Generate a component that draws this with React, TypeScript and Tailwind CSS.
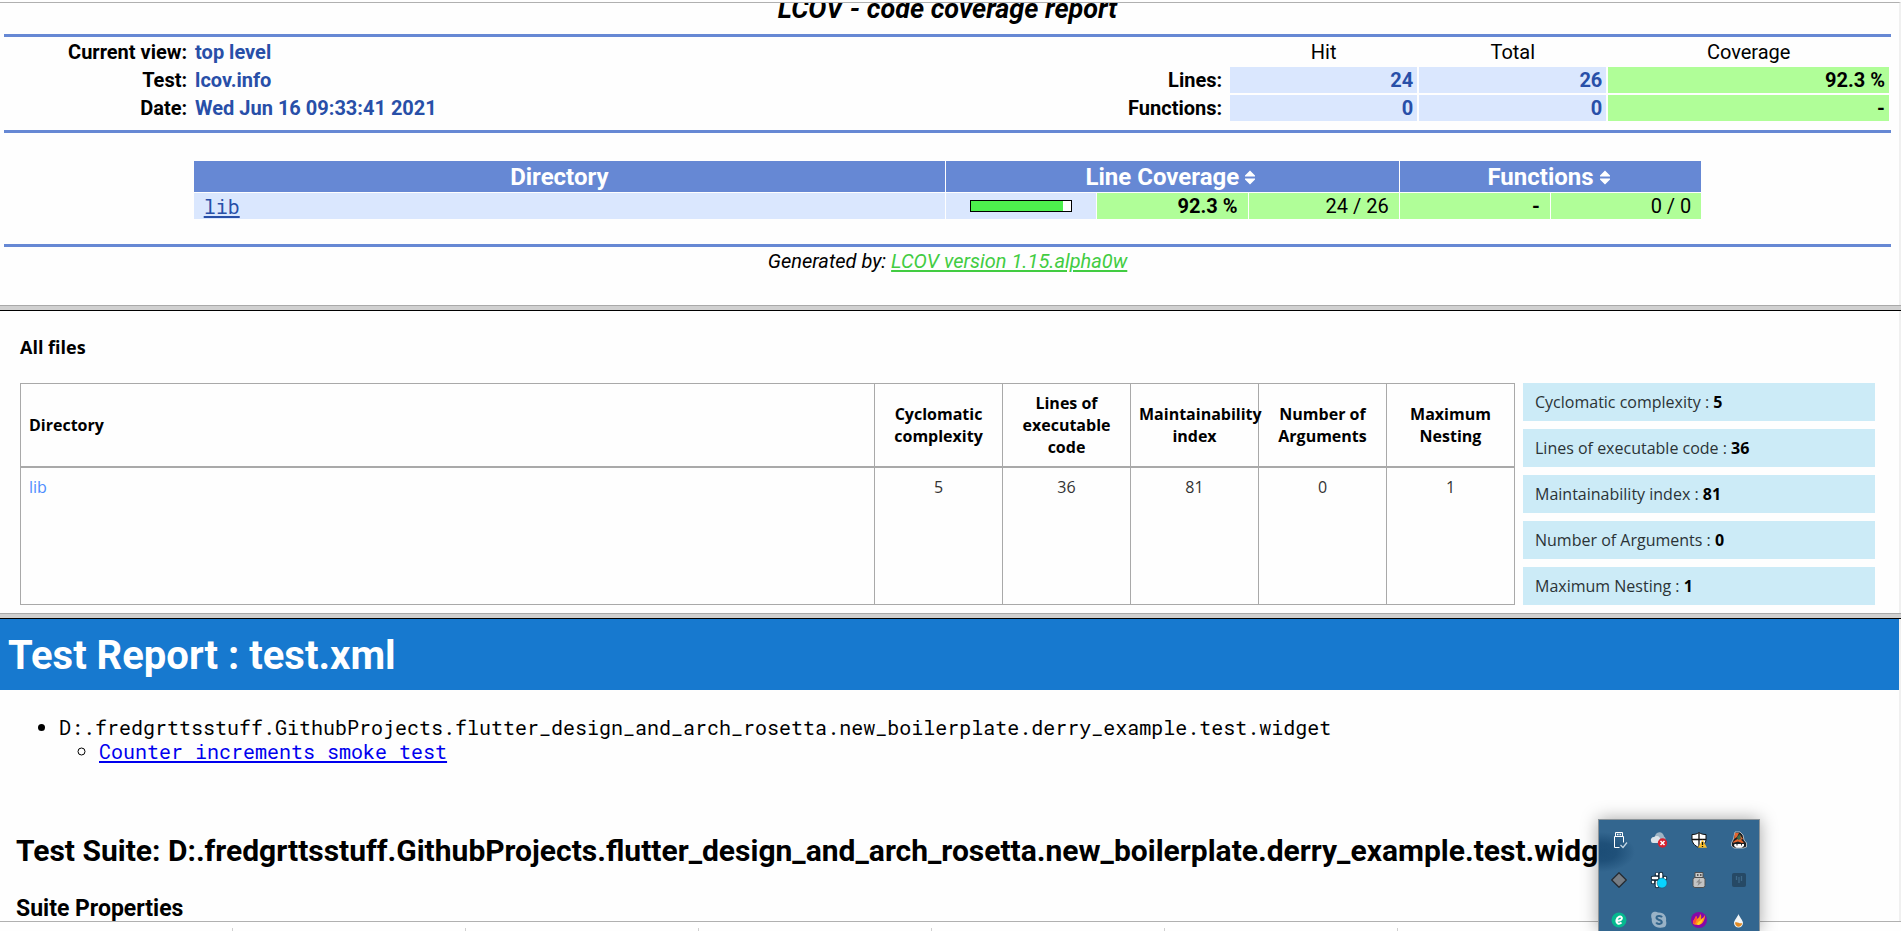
import type { ReactNode } from "react";

const suiteName =
  "D:.fredgrttsstuff.GithubProjects.flutter_design_and_arch_rosetta.new_boilerplate.derry_example.test.widget";

const metrics = [
  { label: "Cyclomatic complexity", value: 5 },
  { label: "Lines of executable code", value: 36 },
  { label: "Maintainability index", value: 81 },
  { label: "Number of Arguments", value: 0 },
  { label: "Maximum Nesting", value: 1 },
];

function Rule() {
  return <div className="h-[3px] bg-[#6688d4]" />;
}

function Splitter() {
  return <div className="h-[6px] shrink-0 border-t border-b border-t-[#a9a9a9] border-b-black bg-[#d0d0d0]" />;
}

function SortIcon() {
  return (
    <svg className="h-[15px] w-[10px]" viewBox="0 0 10 15" fill="#fff" aria-hidden="true">
      <path d="M5 0.5 10 5.5V6.5H0V5.5zM0 8.5H10V9.5L5 14.5 0 9.5z" />
    </svg>
  );
}

function SortHeading({ children }: { children: ReactNode }) {
  return (
    <button type="button" className="mx-auto flex items-center gap-[6px] pr-1 font-bold">
      {children}
      <SortIcon />
    </button>
  );
}

function Summary() {
  const label = "pr-[6px] text-right font-bold";
  const info = "text-left font-bold text-[#284fa8]";
  const count = "bg-[#dae7fe] pr-1 text-right font-bold text-[#284fa8]";
  const cover = "bg-[#b0fe98] pr-1 text-right font-bold";
  return (
    <table className="w-full table-fixed border-separate border-spacing-[2px] text-[20px] leading-[26px]">
      <colgroup>
        <col className="w-[10%]" />
        <col className="w-[35%]" />
        <col className="w-[5%]" />
        <col className="w-[15%]" />
        <col className="w-[10%]" />
        <col className="w-[10%]" />
        <col className="w-[15%]" />
      </colgroup>
      <tbody>
        <tr>
          <th className={label}>Current view:</th>
          <td className={info}>top level</td>
          <td />
          <td />
          <th className="font-normal">Hit</th>
          <th className="font-normal">Total</th>
          <th className="font-normal">Coverage</th>
        </tr>
        <tr>
          <th className={label}>Test:</th>
          <td className={info}>lcov.info</td>
          <td />
          <th className={label}>Lines:</th>
          <td className={count}>24</td>
          <td className={count}>26</td>
          <td className={cover}>92.3 %</td>
        </tr>
        <tr>
          <th className={label}>Date:</th>
          <td className={info}>Wed Jun 16 09:33:41 2021</td>
          <td />
          <th className={label}>Functions:</th>
          <td className={count}>0</td>
          <td className={count}>0</td>
          <td className={cover}>-</td>
        </tr>
      </tbody>
    </table>
  );
}

function CoverageTable() {
  const green = "bg-[#b0fe98] pr-[10px] text-right";
  return (
    <table className="mx-auto w-[80%] table-fixed border-separate border-spacing-[1px] text-[20px] leading-[26px]">
      <colgroup>
        <col className="w-[50%]" />
        <col />
        <col />
        <col />
        <col />
        <col />
      </colgroup>
      <thead>
        <tr className="text-[24px] leading-[29px] text-white">
          <th className="bg-[#6688d4] pt-[2px] pr-5 font-bold">Directory</th>
          <th className="bg-[#6688d4] pt-[2px]" colSpan={3}>
            <SortHeading>Line Coverage</SortHeading>
          </th>
          <th className="bg-[#6688d4] pt-[2px]" colSpan={2}>
            <SortHeading>Functions</SortHeading>
          </th>
        </tr>
      </thead>
      <tbody>
        <tr>
          <td className="bg-[#dae7fe] pl-[10px] font-['Roboto_Mono','Liberation_Mono',monospace]">
            <a href="#lib" className="text-[#284fa8] underline underline-offset-2">
              lib
            </a>
          </td>
          <td className="bg-[#dae7fe]">
            <div className="mx-auto h-[12px] w-[102px] border border-black bg-white">
              <div className="h-full bg-[#4df04d]" style={{ width: "92.3%" }} />
            </div>
          </td>
          <td className={`${green} font-bold`}>92.3 %</td>
          <td className={green}>24 / 26</td>
          <td className={`${green} font-bold`}>-</td>
          <td className={green}>0 / 0</td>
        </tr>
      </tbody>
    </table>
  );
}

function CoveragePane() {
  return (
    <section className="shrink-0 border-t border-r-2 border-t-[#b0b0b0] border-r-[#f0f0f0] px-1 pb-[29px]">
      <div className="flex h-[31px] items-start justify-center overflow-hidden pr-1">
        <h1 className="-mt-[10px] text-[27px] leading-8 font-bold italic">LCOV - code coverage report</h1>
      </div>
      <div className="pr-1">
        <Rule />
        <Summary />
        <div className="pt-[7px]">
          <Rule />
        </div>
        <div className="pt-[27px] pb-6">
          <CoverageTable />
        </div>
        <Rule />
        <p className="text-center text-[20px] leading-[29px] italic">
          Generated by:{" "}
          <a href="#lcov" className="text-[#42cc42] underline underline-offset-2">
            LCOV version 1.15.alpha0w
          </a>
        </p>
      </div>
    </section>
  );
}

function MetricsPane() {
  return (
    <section className="shrink-0 border-r-2 border-[#f0f0f0] px-5 pb-2 font-['Open_Sans','Noto_Sans',sans-serif] text-[16px] leading-[22px]">
      <h2 className="pt-[25px] pb-[25px] text-[18px] font-bold">All files</h2>
      <div className="flex gap-2 pr-1">
        <div className="flex min-w-0 flex-1">
          <table className="w-full table-fixed border-collapse border border-[#a9a9a9]">
            <colgroup>
              <col />
              <col className="w-32" />
              <col className="w-32" />
              <col className="w-32" />
              <col className="w-32" />
              <col className="w-32" />
            </colgroup>
            <thead>
              <tr className="h-[83px] border-b-2 border-[#a9a9a9]">
                <th className="px-2 text-left font-bold">Directory</th>
                {metrics.map((m) => (
                  <th key={m.label} className="border-l border-[#a9a9a9] px-2 font-bold">
                    {m.label}
                  </th>
                ))}
              </tr>
            </thead>
            <tbody>
              <tr className="align-top text-[#333]">
                <td className="px-2 py-2">
                  <a href="#lib-metrics" className="text-[#4d8dff]">
                    lib
                  </a>
                </td>
                {metrics.map((m) => (
                  <td key={m.label} className="border-l border-[#a9a9a9] px-2 py-2 text-center">
                    {m.value}
                  </td>
                ))}
              </tr>
            </tbody>
          </table>
        </div>
        <div className="flex w-[352px] shrink-0 flex-col gap-2">
          {metrics.map((m) => (
            <div key={m.label} className="bg-[#ccebf7] px-3 py-2 text-[#2b3336]">
              {m.label} : <strong className="font-bold text-black">{m.value}</strong>
            </div>
          ))}
        </div>
      </div>
    </section>
  );
}

function TestPane() {
  return (
    <section className="min-h-0 flex-1 overflow-hidden border-r-2 border-[#f0f0f0]">
      <h1 className="bg-[#1779cf] px-2 pt-[13px] pb-[11px] text-[40px] leading-[47px] font-bold text-white">
        Test Report : test.xml
      </h1>
      <ul className="list-disc pt-[25px] pl-[59px] font-['Roboto_Mono','Liberation_Mono',monospace] text-[20px] leading-6">
        <li>
          {suiteName}
          <ul className="list-[circle] pl-10">
            <li>
              <a href="#smoke" className="text-[#0000ee] underline underline-offset-2">
                Counter increments smoke test
              </a>
            </li>
          </ul>
        </li>
      </ul>
      <h2 className="px-4 pt-[70px] text-[30px] leading-[36px] font-bold whitespace-nowrap">Test Suite: {suiteName}</h2>
      <h3 className="px-4 pt-[26px] text-[23px] leading-7 font-bold">Suite Properties</h3>
    </section>
  );
}

const trayIcons: { name: string; art: ReactNode }[] = [
  {
    name: "Safely remove hardware",
    art: (
      <g fill="none" stroke="#fff">
        <path d="M4.500 4.500V.5h7v4M3.500 15.500v-11h9v6M3.500 15.500h5" />
        <path d="M6 2.500h1.500M8.500 2.500H10" strokeWidth="1.500" />
        <path d="M9.500 13l2.500 2.500L16 10.500" stroke="#c4d6e4" strokeWidth="1.300" />
      </g>
    ),
  },
  {
    name: "Cloud sync error",
    art: (
      <g>
        <path d="M4 5a4.500 4.500 0 0 1 9-.5 3 3 0 0 1 1 4L5 9z" fill="#9fb4c4" />
        <path d="M0 9a3 3 0 0 1 3-4 4 4 0 0 1 6 1v5H2a2 2 0 0 1-2-2z" fill="#dce3e9" />
        <circle cx="11.500" cy="11" r="4.700" fill="#d6202f" />
        <path d="M9.500 9l4 4m0-4-4 4" stroke="#fff" strokeWidth="1.500" />
      </g>
    ),
  },
  {
    name: "Windows security",
    art: (
      <g>
        <path d="M8 .5C10 2 12 2.500 15 2.500V7c0 4-3 7-7 8.500C4 14 1 11 1 7V2.500C4 2.500 6 2 8 .5z" fill="#fff" stroke="#111" />
        <path d="M8 1v14M1 7.500h14" stroke="#111" strokeWidth="1.300" />
        <path d="M11.500 7.500 16 15.800H7z" fill="#fbc02d" />
        <path d="M11.500 10v3M11.500 14v1" stroke="#111" strokeWidth="1.300" />
      </g>
    ),
  },
  {
    name: "Character",
    art: (
      <g>
        <path d="M4 0h5l3 3 1 5 2.500 3v4l-3 1H3l-2.500-2V11l2-4z" fill="#1b1f22" stroke="#ece7e2" strokeWidth=".7" />
        <path d="M4 1h4l-2 4-3 2zM9 3l3 4-3 1zM2.500 9.500 8 6l5 4.500-2 .5-4-1.500-5 1.500z" fill="#e2642d" />
        <path d="M6 5l3-3 1 5-3 1z" fill="#3c6b4a" />
        <path d="M3.500 12h9.500v2l-2.500 1.700h-5L3 14z" fill="#fff" />
        <path d="M6 12v1.500M10.500 12v1.500" stroke="#222" />
      </g>
    ),
  },
  {
    name: "Git client",
    art: (
      <path d="M8 .7 15.300 8 8 15.300.7 8z" fill="#777d84" stroke="#262c33" strokeWidth="1.300" strokeLinejoin="round" />
    ),
  },
  {
    name: "Team chat",
    art: (
      <g>
        <g stroke="#12283a" strokeWidth="4.600" strokeLinecap="round">
          <path d="M6 2.500V6M2 6h4M10 2v4M14 6h-2M2 10h4M6 13v1" />
        </g>
        <g stroke="#fff" strokeWidth="2.600" strokeLinecap="round">
          <path d="M6 2v.1M6 6H2M10 2v4M14 6v.1M2 10v.1M6 10v4" />
        </g>
        <circle cx="11" cy="11" r="5" fill="#08d3ff" stroke="#1b5069" strokeWidth=".5" />
      </g>
    ),
  },
  {
    name: "USB device",
    art: (
      <g>
        <path d="M4 .5h8v5H4z" fill="#c9c9c9" stroke="#505050" />
        <path d="M6 3h1.500M9 3h1.500" stroke="#333" strokeWidth="1.500" />
        <rect x="2" y="5.500" width="12" height="10" rx="2" fill="#c4c4c4" stroke="#505050" />
        <path d="M9 6.500 5 10.500h2.500L6.500 14 11.500 9.800H8.700z" fill="#8d8d8d" />
      </g>
    ),
  },
  {
    name: "Audio tool",
    art: (
      <g>
        <rect x="1" y="1" width="14" height="14" rx="2" fill="#264965" />
        <path d="M5.500 4v4M8 5v6M10.500 4v5" stroke="#3d6888" strokeWidth="1.300" />
      </g>
    ),
  },
  {
    name: "Antivirus",
    art: (
      <g>
        <circle cx="8" cy="8" r="7.500" fill="#06b88f" />
        <path d="M5.500 8.600c4 .4 6-1.100 5.300-3C10 3.800 6.300 4.400 5.500 8c-.6 3.700 2.500 4.700 5 2.500" fill="none" stroke="#fff" strokeWidth="2" />
      </g>
    ),
  },
  {
    name: "Skype",
    art: (
      <g>
        <path d="M1 1c2-2 5-1 6-.5 6-.5 9 4 8 8.500 1 3 0 7-4 6.500C5 17 0 12 .8 7 0 5-.2 2.500 1 1z" fill="#99b2c6" />
        <path d="M11 5.200C10 3.300 5.500 3.500 5.500 5.800c0 2.700 5.300 1.600 5.300 4.300 0 2.300-4.400 2.500-5.600.4" fill="none" stroke="#33658c" strokeWidth="2" />
      </g>
    ),
  },
  {
    name: "Flame",
    art: (
      <g>
        <circle cx="8" cy="8" r="8" fill="#8608a8" />
        <path d="M2 11c0-3 2-4 3-7 1 1 1 2 1 3 2-1 3-3 3-5 2 2 1 4 1 5 2-1 3-2 4-4 0 6-3 10-7 10-3 0-5-1-5-2z" fill="#ff9418" />
        <path d="M2 11c0-3 2-4 3-7 1 1 1 2 1 3l-2 5z" fill="#ff4b3a" />
        <path d="M6 12c1-3 4-3 6-6-1 5-3 7-5 7z" fill="#ffd21c" />
      </g>
    ),
  },
  {
    name: "Rain",
    art: (
      <g>
        <path d="M7.500 2c1 3 4.500 6.500 4.500 9a4.500 4.500 0 0 1-9 0c0-2.500 3.500-6 4.500-9z" fill="#f2f5f7" />
        <path d="M4 10.500c3-1 4 1.500 7.300.7-.5 2.300-2 3.500-3.800 3.500S4 13 4 10.500z" fill="#e18a24" />
      </g>
    ),
  },
];

function Tray() {
  return (
    <div className="absolute right-[141px] bottom-0 h-28 overflow-hidden border border-b-0 border-[#8c9499] bg-[#33668f] bg-[radial-gradient(ellipse_34px_20px_at_2px_32px,#1c4d76_0%,#1f5079_45%,#33668f_100%)] shadow-[0_0_16px_rgba(0,0,0,0.35)]">
      <div className="grid grid-cols-4">
        {trayIcons.map((icon) => (
          <button key={icon.name} type="button" aria-label={icon.name} className="flex size-10 items-center justify-center">
            <svg className="size-4 overflow-visible" viewBox="0 0 16 16">
              {icon.art}
            </svg>
          </button>
        ))}
      </div>
    </div>
  );
}

export default function App() {
  return (
    <div className="relative flex h-screen flex-col overflow-hidden bg-[#fefefe] pt-[2px] font-[Roboto,sans-serif] text-black">
      <div className="flex min-h-0 flex-1 flex-col">
        <CoveragePane />
        <Splitter />
        <MetricsPane />
        <Splitter />
        <TestPane />
      </div>
      <footer className="flex h-[10px] shrink-0 items-end border-t border-[#b0b0b0]">
        {Array.from({ length: 7 }, (_, i) => (
          <div key={i} className="h-[3px] w-[233px] border-r border-[#d0d0d0]" />
        ))}
      </footer>
      <Tray />
    </div>
  );
}
